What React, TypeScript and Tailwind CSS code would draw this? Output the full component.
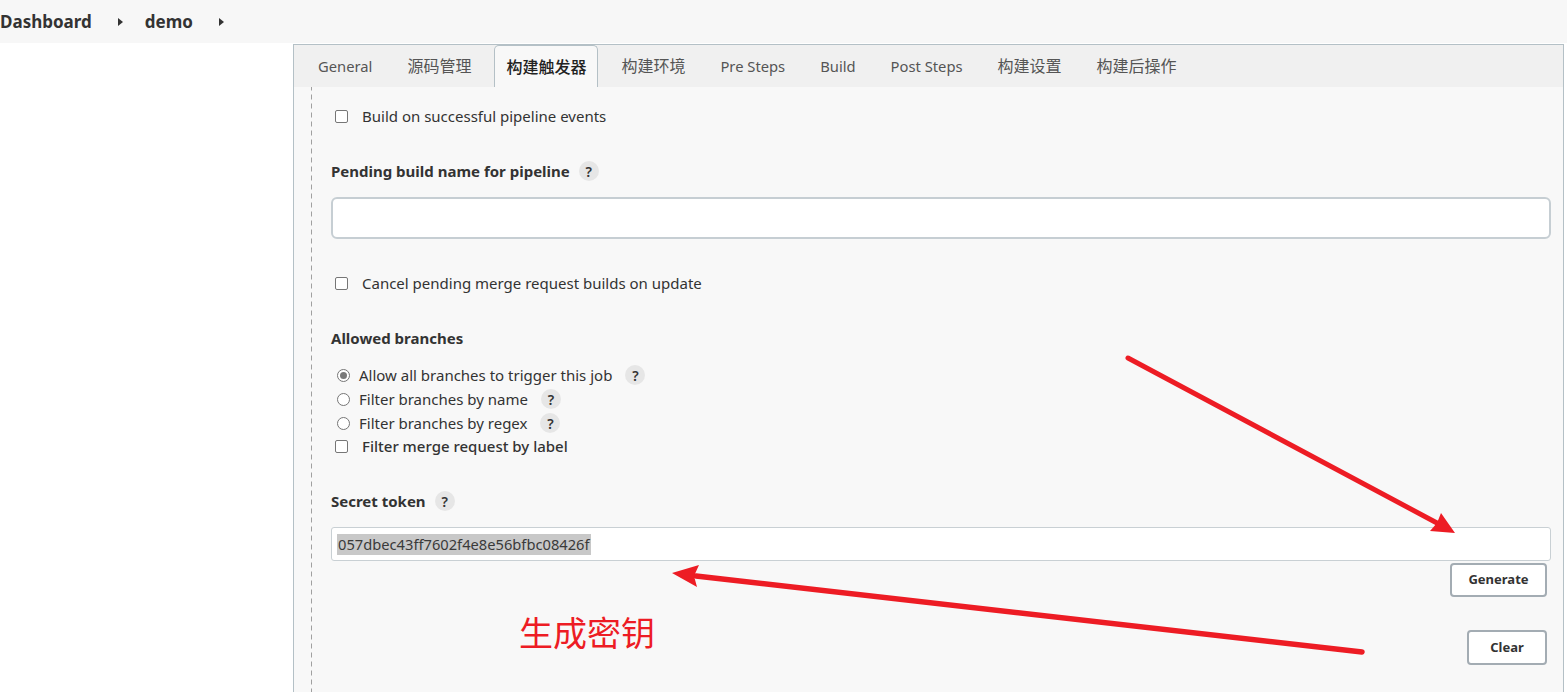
import React from 'react';

const tabs = [
  { label: 'General', cjk: false },
  { label: '源码管理', cjk: true },
  { label: '构建触发器', cjk: true, active: true },
  { label: '构建环境', cjk: true },
  { label: 'Pre Steps', cjk: false },
  { label: 'Build', cjk: false },
  { label: 'Post Steps', cjk: false },
  { label: '构建设置', cjk: true },
  { label: '构建后操作', cjk: true },
];

function Help() {
  return (
    <span className="ml-[9px] inline-flex h-[20px] w-[20px] items-center justify-center rounded-full bg-[#e6e6e6] text-[14px] font-semibold text-[#333]">
      ?
    </span>
  );
}

function Checkbox() {
  return <span className="inline-block h-[13px] w-[13px] rounded-[2px] border border-[#767676] bg-white" />;
}

function Radio({ checked }: { checked?: boolean }) {
  return (
    <span className="inline-flex h-[13px] w-[13px] items-center justify-center rounded-full border border-[#767676] bg-white">
      {checked && <span className="h-[7px] w-[7px] rounded-full bg-[#7a7a7a]" />}
    </span>
  );
}

function Caret() {
  return (
    <svg width="5" height="8" viewBox="0 0 5 8" className="mx-[26px]">
      <path d="M0 0 L5 4 L0 8 Z" fill="#333" />
    </svg>
  );
}

export default function App() {
  return (
    <div className="relative min-h-[692px] overflow-hidden bg-white font-['Noto_Sans','Noto_Sans_CJK_SC',sans-serif] text-[#333]">
      {/* Breadcrumb */}
      <div className="flex h-[43px] items-center bg-[#f7f7f7] text-[17px] font-bold text-[#333]">
        <span>Dashboard</span>
        <Caret />
        <span className="-ml-[4px]">demo</span>
        <Caret />
      </div>

      {/* Config panel */}
      <div className="ml-[293px] mr-[3px] mt-[1px] border-x border-t border-[#b4c0c6] bg-[#f8f8f8]">
        <div className="flex h-[42px] items-end gap-[11px] bg-[#f0f0f0] pl-[12px] text-[14.75px] text-[#555]">
          {tabs.map((t) =>
            t.active ? (
              <div key={t.label} className="flex h-[42px] items-center rounded-t-[5px] border-x border-t border-[#b4c0c6] bg-[#f8f8f8] px-[11px] text-[16px] font-medium text-[#222]">
                {t.label}
              </div>
            ) : (
              <div key={t.label} className={t.cjk ? 'flex h-[42px] items-center px-3 text-[16px]' : 'flex h-[42px] items-center px-3'}>
                {t.label}
              </div>
            )
          )}
        </div>

        <div className="ml-[17px] bg-[linear-gradient(#a0a0a0_60%,transparent_0)] bg-[length:1px_9px] bg-left bg-repeat-y pb-[40px] pl-[20px] pr-[12px] pt-[17px] text-[15px]">
          <div className="flex h-[24px] items-center">
            <span className="ml-[4px] mr-[14px] flex"><Checkbox /></span>
            Build on successful pipeline events
          </div>

          <div className="mt-[31px] flex h-[24px] items-center font-bold">
            Pending build name for pipeline
            <Help />
          </div>
          <div className="mt-[14px] h-[42px] rounded-[6px] border-2 border-[#c6ced3] bg-white" />

          <div className="mt-[32px] flex h-[24px] items-center">
            <span className="ml-[4px] mr-[14px] flex"><Checkbox /></span>
            Cancel pending merge request builds on update
          </div>

          <div className="mt-[31px] flex h-[24px] items-center font-bold">Allowed branches</div>

          <div className="mt-[13px]">
            <div className="flex h-[24px] items-center">
              <span className="ml-[6px] mr-[9px] flex"><Radio checked /></span>
              Allow all branches to trigger this job
              <span className="ml-[4px] flex"><Help /></span>
            </div>
            <div className="flex h-[24px] items-center">
              <span className="ml-[6px] mr-[9px] flex"><Radio /></span>
              Filter branches by name
              <span className="ml-[4px] flex"><Help /></span>
            </div>
            <div className="flex h-[24px] items-center">
              <span className="ml-[6px] mr-[9px] flex"><Radio /></span>
              Filter branches by regex
              <span className="ml-[4px] flex"><Help /></span>
            </div>
            <div className="flex h-[23px] items-center font-medium">
              <span className="ml-[4px] mr-[14px] flex"><Checkbox /></span>
              Filter merge request by label
            </div>
          </div>

          <div className="mt-[31px] flex h-[24px] items-center font-bold">
            Secret token
            <Help />
          </div>
          <div className="mt-[14px] flex h-[34px] items-center rounded-[3px] border border-[#c9d0d4] bg-white pl-[5px]">
            <span className="bg-[#c8c8c8] px-[1px] text-[14.7px] leading-[21px] text-[#3a3a3a]">057dbec43ff7602f4e8e56bfbc08426f</span>
          </div>
          <div className="mr-[4px] mt-[2px] flex justify-end">
            <button className="h-[34px] w-[97px] rounded-[4px] border-2 border-[#a3acb3] bg-white text-[13px] font-bold text-[#333]">
              Generate
            </button>
          </div>
          <div className="mr-[4px] mt-[33px] flex justify-end">
            <button className="h-[35px] w-[80px] rounded-[4px] border-2 border-[#a3acb3] bg-white text-[13px] font-bold text-[#333]">
              Clear
            </button>
          </div>
        </div>
      </div>

      {/* Annotations */}
      <div className="absolute left-[519px] top-[612px] text-[34px] leading-[42px] text-[#ed1c24]">生成密钥</div>
      <svg className="pointer-events-none absolute left-0 top-0" width="1567" height="692">
        <line x1="1128" y1="358" x2="1437" y2="523" stroke="#ed1c24" strokeWidth="5" strokeLinecap="round" />
        <polygon points="1455,533 1430,531 1437,523 1441,513" fill="#ed1c24" />
        <line x1="1362" y1="652" x2="696" y2="576" stroke="#ed1c24" strokeWidth="5.5" strokeLinecap="round" />
        <polygon points="672,573 699,565 694,576 697,587" fill="#ed1c24" />
      </svg>
    </div>
  );
}
